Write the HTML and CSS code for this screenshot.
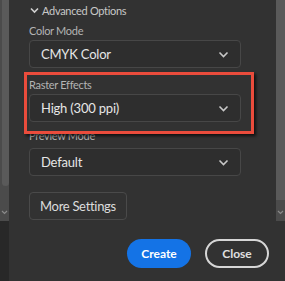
FILE: index.html
```html
<!DOCTYPE html>
<html lang="en">
<head>
    <meta charset="UTF-8">
    <meta name="viewport" content="width=device-width, initial-scale=1.0">
    <title>New Document - Advanced Options</title>
    <link rel="stylesheet" href="styles.css">
</head>
<body>
    <div class="window">
        <div class="scroll-left">
            <div class="thumb"></div>
            <svg class="scroll-arrow" width="7" height="5" viewBox="0 0 7 5"><path d="M1 1l2.5 2.5L6 1" fill="none" stroke="#8a8a8a" stroke-width="1.2"/></svg>
        </div>
        <div class="content">
            <div class="section-toggle">
                <svg width="9" height="7" viewBox="0 0 9 7"><path d="M1 1.5l3.5 3.5L8 1.5" fill="none" stroke="#d0d0d0" stroke-width="1.6"/></svg>
                <span>Advanced Options</span>
            </div>
            <div class="field">
                <div class="field-label">Color Mode</div>
                <div class="select">
                    <span>CMYK Color</span>
                    <svg width="11" height="7" viewBox="0 0 11 7"><path d="M1.5 1.5l4 4 4-4" fill="none" stroke="#c8c8c8" stroke-width="1.6"/></svg>
                </div>
            </div>
            <div class="field highlighted">
                <div class="field-label">Raster Effects</div>
                <div class="select">
                    <span>High (300 ppi)</span>
                    <svg width="11" height="7" viewBox="0 0 11 7"><path d="M1.5 1.5l4 4 4-4" fill="none" stroke="#c8c8c8" stroke-width="1.6"/></svg>
                </div>
                <div class="highlight-box"></div>
            </div>
            <div class="field">
                <div class="field-label">Preview Mode</div>
                <div class="select">
                    <span>Default</span>
                    <svg width="11" height="7" viewBox="0 0 11 7"><path d="M1.5 1.5l4 4 4-4" fill="none" stroke="#c8c8c8" stroke-width="1.6"/></svg>
                </div>
            </div>
            <button class="more-btn">More Settings</button>
        </div>
        <div class="scroll-right">
            <div class="thumb"></div>
            <svg class="scroll-arrow" width="7" height="5" viewBox="0 0 7 5"><path d="M1 1l2.5 2.5L6 1" fill="none" stroke="#8a8a8a" stroke-width="1.2"/></svg>
        </div>
        <div class="gutter"></div>
        <div class="footer">
            <button class="btn btn-primary">Create</button>
            <button class="btn btn-outline">Close</button>
        </div>
    </div>
</body>
</html>
```

FILE: styles.css
```css
body { margin: 0; background-color: #323232; font-family: Lato, "Open Sans", sans-serif; overflow: hidden; }
.window { display: grid; grid-template-columns: 9px 1fr 9px; grid-template-rows: 221px 60px; width: 285px; height: 281px; }

.scroll-left, .scroll-right { background-color: #4b4b4b; display: flex; flex-direction: column; align-items: center; }
.scroll-left .thumb { width: 7px; height: 186px; margin-left: 1px; background-color: #5a5a5a; border-radius: 0 0 4px 4px; }
.scroll-right .thumb { width: 9px; flex-grow: 1; background-color: #5a5a5a; }
.scroll-arrow { margin: 24px 0 6px; }
.scroll-right .scroll-arrow { margin: 10px 0 6px; }

.content { position: relative; padding: 0 35px 0 20px; }
.section-toggle { display: flex; align-items: center; height: 21px; margin-left: 1px; color: #c8c8c8; font-size: 11px; letter-spacing: -0.3px; }
.section-toggle svg { margin-right: 3px; }

.field { position: relative; }
.field-label { height: 19px; line-height: 19px; font-size: 11px; letter-spacing: -0.3px; color: #b4b4b4; }
.select { display: flex; align-items: center; justify-content: space-between; height: 26px; padding: 0 11px 0 11px; border: 1px solid #474747; border-radius: 4px; background-color: #2e2e2e; color: #e6e6e6; font-size: 13px; letter-spacing: -0.2px; }

.highlighted { margin-top: 7px; margin-bottom: 4px; }
.highlighted + .field .field-label { height: 22px; }
.highlight-box { position: absolute; top: -3px; left: -5px; right: -13px; bottom: -12px; border: 3px solid #ea4c3c; box-shadow: 2px 2px 3px rgba(0, 0, 0, 0.7); z-index: 2; }

.more-btn { margin-top: 16px; height: 28px; padding: 0 10px; border: 1px solid #4a4a4a; border-radius: 4px; background-color: #323232; color: #dcdcdc; font-family: inherit; font-size: 13px; letter-spacing: -0.3px; }

.gutter { background-color: #282828; }
.footer { grid-column: 2 / 4; display: flex; justify-content: flex-end; align-items: flex-start; gap: 14px; padding: 18px 16px 0 0; }
.btn { height: 29px; width: 64px; border-radius: 15px; font-family: inherit; font-size: 12px; font-weight: 700; }
.btn-primary { background-color: #1473e6; border: none; color: #fff; }
.btn-outline { background: none; border: 2px solid #d6d6d6; color: #e0e0e0; }
```
